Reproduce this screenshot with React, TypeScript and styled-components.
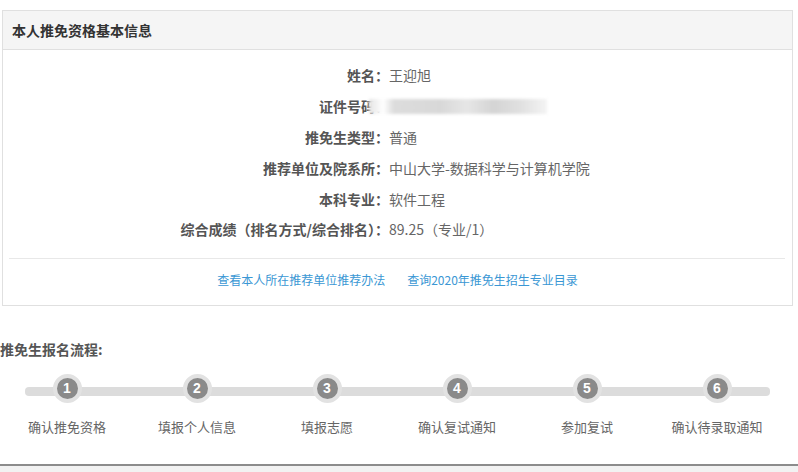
import React from 'react';
import styled, { createGlobalStyle } from 'styled-components';

const GlobalStyle = createGlobalStyle`
  html, body {
    margin: 0;
    padding: 0;
    background: #fff;
    font-family: "Noto Sans CJK SC", "Liberation Sans", sans-serif;
  }
`;

const infoRows: { label: string; value?: string; hidden?: boolean }[] = [
  { label: '姓名：', value: '王迎旭' },
  { label: '证件号码：', hidden: true },
  { label: '推免生类型：', value: '普通' },
  { label: '推荐单位及院系所：', value: '中山大学-数据科学与计算机学院' },
  { label: '本科专业：', value: '软件工程' },
  { label: '综合成绩（排名方式/综合排名）：', value: '89.25（专业/1）' },
];

const steps = ['确认推免资格', '填报个人信息', '填报志愿', '确认复试通知', '参加复试', '确认待录取通知'];

const App: React.FC = () => {
  return (
    <Page>
      <GlobalStyle />
      <Panel>
        <PanelHeader>本人推免资格基本信息</PanelHeader>
        <InfoGrid>
          {infoRows.map((row) => (
            <React.Fragment key={row.label}>
              <Label>{row.label}</Label>
              <Value>{row.hidden ? <Masked /> : row.value}</Value>
            </React.Fragment>
          ))}
        </InfoGrid>
        <Divider />
        <Links>
          <LinkText href="#">查看本人所在推荐单位推荐办法</LinkText>
          <LinkText href="#">查询2020年推免生招生专业目录</LinkText>
        </Links>
      </Panel>

      <FlowTitle>推免生报名流程:</FlowTitle>
      <Steps>
        <Track />
        {steps.map((s, i) => (
          <Step key={s}>
            <Dot>{i + 1}</Dot>
            <StepLabel>{s}</StepLabel>
          </Step>
        ))}
      </Steps>
      <Footer />
    </Page>
  );
};

export default App;

const Page = styled.div`
  width: 798px;
  height: 472px;
  overflow: hidden;
  display: flex;
  flex-direction: column;
`;

const Panel = styled.div`
  margin: 10px 0 0 2px;
  width: 789px;
  height: 294px;
  border: 1px solid #e0e0e0;
  display: flex;
  flex-direction: column;
`;

const PanelHeader = styled.div`
  height: 38px;
  line-height: 38px;
  padding-left: 9px;
  background: #f5f5f5;
  border-bottom: 1px solid #e0e0e0;
  font-size: 14px;
  font-weight: bold;
  color: #333;
`;

const InfoGrid = styled.div`
  display: grid;
  grid-template-columns: 386px 1fr;
  grid-auto-rows: 30.8px;
  align-items: center;
  padding-top: 10px;
  font-size: 14px;
`;

const Label = styled.div`
  text-align: right;
  font-weight: bold;
  color: #555;
  white-space: nowrap;
`;

const Value = styled.div`
  color: #666;
  white-space: nowrap;
`;

const Masked = styled.div`
  margin-left: -20px;
  width: 178px;
  height: 15px;
  background: linear-gradient(90deg, #e4e4e4 0%, #fff 8%, #dcdcdc 14%, #d8d8d8 40%, #e6e6e6 55%, #d4d4d4 70%, #e0e0e0 85%, #f4f4f4 100%);
  filter: blur(1.5px);
`;

const Divider = styled.div`
  margin: 13px 7px 0 6px;
  height: 1px;
  background: #e8e8e8;
`;

const Links = styled.div`
  display: flex;
  justify-content: center;
  gap: 22px;
  padding: 12px 0 0 0;
  font-size: 12px;
`;

const LinkText = styled.a`
  color: #3a97d4;
  text-decoration: none;
`;

const FlowTitle = styled.div`
  margin-top: 33px;
  font-size: 14px;
  font-weight: bold;
  color: #555;
  line-height: 20px;
`;

const Steps = styled.div`
  position: relative;
  display: flex;
  margin: 15px 0 0 2px;
  width: 780px;
`;

const Track = styled.div`
  position: absolute;
  left: 23px;
  top: 13px;
  width: 745px;
  height: 9px;
  border-radius: 4px;
  background: #dcdcdc;
`;

const Step = styled.div`
  position: relative;
  width: 130px;
  display: flex;
  flex-direction: column;
  align-items: center;
`;

const Dot = styled.div`
  width: 21px;
  height: 21px;
  border-radius: 50%;
  background: #8a8a8a;
  border: 4px solid #e2e2e2;
  color: #fff;
  font-family: "Liberation Sans", Arial, sans-serif;
  font-weight: bold;
  font-size: 14px;
  line-height: 21px;
  text-align: center;
`;

const StepLabel = styled.div`
  margin-top: 14px;
  font-size: 13px;
  color: #666;
  white-space: nowrap;
`;

const Footer = styled.div`
  margin-top: auto;
  height: 6px;
  border-top: 2px solid #8c8c8c;
  background: #f2f2f2;
`;
